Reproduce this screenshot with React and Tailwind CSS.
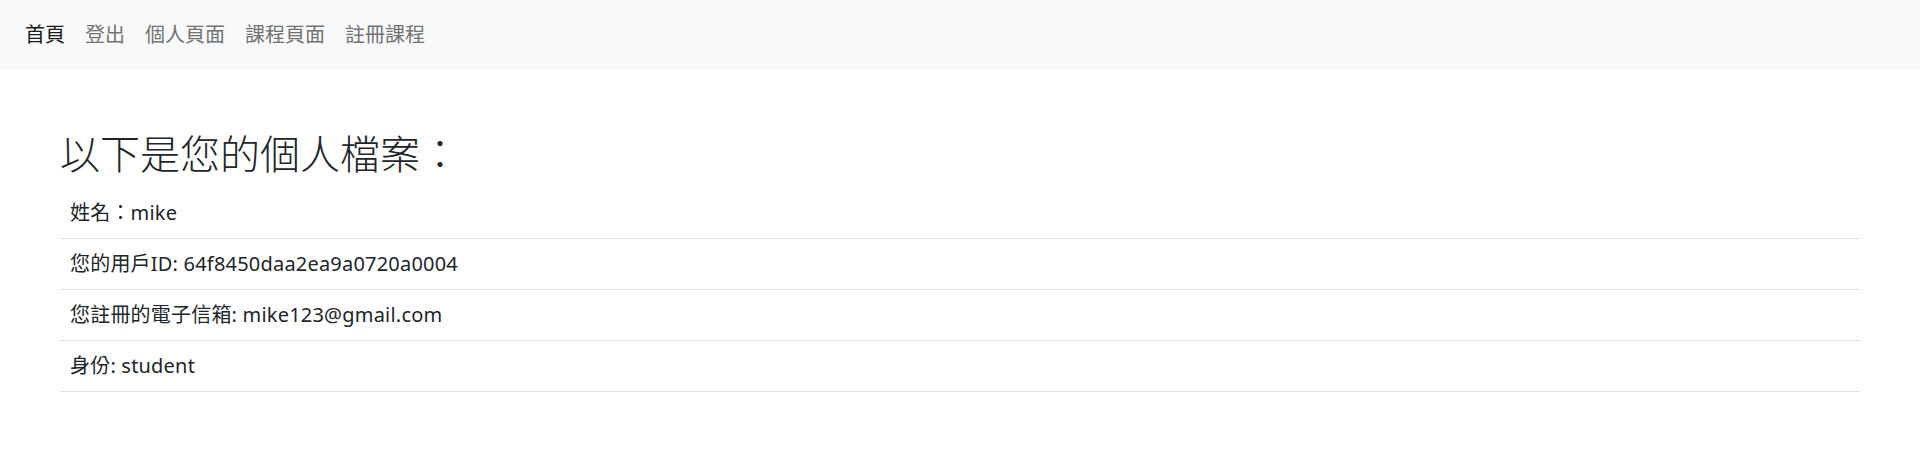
const navLinks = ["首頁", "登出", "個人頁面", "課程頁面", "註冊課程"];

const profileRows = [
  "姓名：mike",
  "您的用戶ID: 64f8450daa2ea9a0720a0004",
  "您註冊的電子信箱: mike123@gmail.com",
  "身份: student",
];

export default function App() {
  return (
    <div
      className="min-h-[472px] bg-white text-[#212529]"
      style={{ fontFamily: '"Noto Sans", "Noto Sans CJK TC", sans-serif' }}
    >
      {/* navbar begins */}
      <nav className="h-[70px] bg-[#f8f9fa] flex items-center px-[15px]">
        <ul className="flex items-center list-none">
          {navLinks.map((link, index) => {
            return (
              <li
                key={link}
                className={`${
                  index === 0 ? "text-[#1a1a1a]" : "text-[#737373]"
                } text-[20px] leading-[1.5] px-[10px]`}
              >
                {link}
              </li>
            );
          })}
        </ul>
      </nav>
      {/* navbar ends */}

      {/* profile begins */}
      <main className="px-[60px] pt-[60px]">
        <h2 className="text-[40px] leading-[1.2] font-light mb-[10px]">
          以下是您的個人檔案：
        </h2>
        <ul className="list-none">
          {profileRows.map((row) => {
            return (
              <li
                key={row}
                className="h-[51px] flex items-center px-[10px] text-[20px] tracking-[0.2px] border-b border-[#dee2e6]"
              >
                {row}
              </li>
            );
          })}
        </ul>
      </main>
      {/* profile ends */}
    </div>
  );
}
